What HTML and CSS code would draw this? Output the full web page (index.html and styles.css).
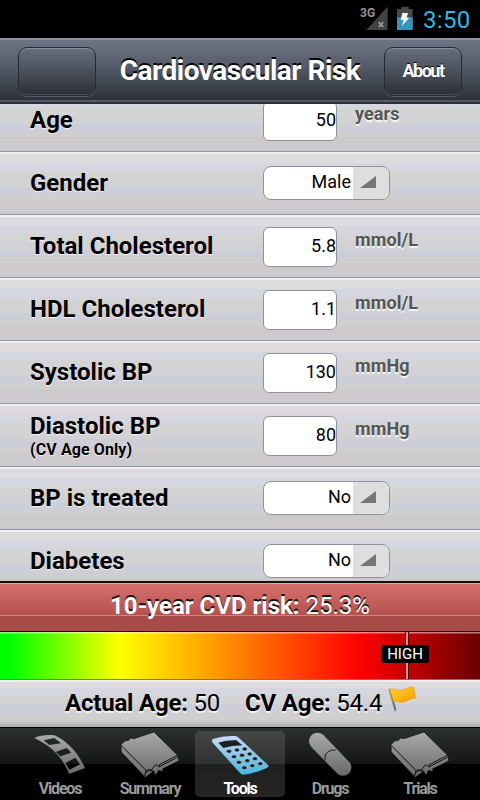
FILE: index.html
```
<!DOCTYPE html>
<html lang="en">
  <head>
    <meta charset="UTF-8" />
    <title>Cardiovascular Risk</title>
    <link rel="stylesheet" href="styles.css">
  </head>
  <body>
    <div class="status">
      <svg class="signal" viewBox="60 0 165 114" width="55" height="38">
        <path d="M143 20V90H79Z" fill="#424242" />
        <path d="M116 66L130 81M130 66L116 81" stroke="#aaa" stroke-width="4" />
        <text x="60" y="50" class="net">3G</text>
        <path d="M171 27H184V20H206V27H218V90H171Z" fill="#484848" />
        <path d="M171 52H218V90H171Z" fill="#3496bb" />
        <path d="M187 39H204L200 53H208L186 78L190 60H182Z" fill="#f4f4f4" />
      </svg>
      <span class="clock">3:50</span>
    </div>

    <div class="header">
      <div class="btn"></div>
      <h1>Cardiovascular Risk</h1>
      <div class="btn">About</div>
    </div>

    <div class="list">
      <div class="rows">
        <div class="row">
          <div class="label">Age</div>
          <div class="input">50</div>
          <div class="unit">years</div>
        </div>
        <div class="row">
          <div class="label">Gender</div>
          <div class="select"><span>Male</span><i></i></div>
        </div>
        <div class="row">
          <div class="label">Total Cholesterol</div>
          <div class="input">5.8</div>
          <div class="unit">mmol/L</div>
        </div>
        <div class="row">
          <div class="label">HDL Cholesterol</div>
          <div class="input">1.1</div>
          <div class="unit">mmol/L</div>
        </div>
        <div class="row">
          <div class="label">Systolic BP</div>
          <div class="input">130</div>
          <div class="unit">mmHg</div>
        </div>
        <div class="row">
          <div class="label two">Diastolic BP<small>(CV Age Only)</small></div>
          <div class="input">80</div>
          <div class="unit">mmHg</div>
        </div>
        <div class="row">
          <div class="label">BP is treated</div>
          <div class="select"><span>No</span><i></i></div>
        </div>
        <div class="row">
          <div class="label">Diabetes</div>
          <div class="select"><span>No</span><i></i></div>
        </div>
      </div>
    </div>

    <div class="risk"><b>10-year CVD risk:</b>&nbsp;<span>25.3%</span></div>
    <div class="scale">
      <div class="marker"></div>
      <div class="level">HIGH</div>
    </div>
    <div class="ages">
      <div class="actual"><b>Actual Age:</b> 50</div>
      <div class="cv"><b>CV Age:</b> 54.4</div>
      <svg class="flag" viewBox="444 330 90 84" width="30" height="28">
        <defs>
          <linearGradient id="gold" x1="0" y1="0" x2="1" y2="1">
            <stop offset="0" stop-color="#ffcf38" />
            <stop offset=".45" stop-color="#fdbb18" />
            <stop offset="1" stop-color="#f39a08" />
          </linearGradient>
        </defs>
        <path d="M449 344L466 406" stroke="#999" stroke-width="7" stroke-linecap="round" />
        <path d="M450 344L467 405" stroke="#555" stroke-width="3" />
        <path d="M449 343C462 338 474 350 488 345C503 340 508 335 521 336L527 370C512 369 502 380 488 382C477 383 468 376 460 378Z" fill="url(#gold)" stroke="#eda314" stroke-width="2" />
      </svg>
    </div>

    <div class="tabs">
      <svg width="0" height="0" class="defs">
        <defs>
          <linearGradient id="grey" x1="0" y1="0" x2="0" y2="1">
            <stop offset="0" stop-color="#aaa" />
            <stop offset="1" stop-color="#686868" />
          </linearGradient>
          <linearGradient id="blue" x1="0" y1="0" x2="0" y2="1">
            <stop offset="0" stop-color="#c9d9f8" />
            <stop offset="1" stop-color="#43b5dc" />
          </linearGradient>
          <symbol id="book" viewBox="315 24 270 150">
            <path d="M363 74L374 63L386 61L391 54L402 56L462 36L532 105L537 122L487 147L489 155L476 151L467 166L462 154L452 160L436 172L364 96Z" fill="url(#grey)" stroke="#111" stroke-width="2" />
            <path d="M363 76L438 151L455 149L467 134L479 141L478 134L532 106M438 151L434 169M480 139L532 112M438 158L447 151L461 154M456 150L463 165" fill="none" stroke="#111" stroke-width="3" />
          </symbol>
        </defs>
      </svg>
      <div class="tab">
        <svg viewBox="45 24 270 150" width="90" height="50">
          <path fill-rule="evenodd" fill="url(#grey)" d="M103 54C120 46 140 44 163 46C205 65 235 100 255 144L207 162C190 115 155 78 103 54ZM131 61L148 75L183 70L163 54ZM167 96L181 109L214 98L200 84ZM196 129L208 149L240 133L226 113Z" />
        </svg>
        Videos
      </div>
      <div class="tab">
        <svg width="90" height="50"><use href="#book" width="90" height="50" /></svg>
        Summary
      </div>
      <div class="tab active">
        <svg viewBox="45 24 270 150" width="90" height="50">
          <path d="M96 63Q95 58 101 56Q130 46 166 48Q173 49 177 54L265 136Q267 140 262 143Q225 160 190 164Q184 164 180 159L98 68Z" fill="url(#blue)" />
          <path d="M115 68Q140 60 169 61L187 76Q157 77 130 84Z" fill="#1b2023" />
          <g fill="#1b2328" stroke="#dceaf6" stroke-width="1.5">
            <ellipse cx="147" cy="94" rx="8" ry="6" /><ellipse cx="171" cy="90" rx="8" ry="6" /><ellipse cx="194" cy="87" rx="8" ry="6" />
            <ellipse cx="162" cy="110" rx="8" ry="6" /><ellipse cx="186" cy="106" rx="8" ry="6" /><ellipse cx="209" cy="102" rx="8" ry="6" />
            <ellipse cx="177" cy="127" rx="8" ry="6" /><ellipse cx="202" cy="122" rx="8" ry="6" /><ellipse cx="225" cy="116" rx="8" ry="6" />
            <ellipse cx="193" cy="143" rx="8" ry="6" /><ellipse cx="217" cy="137" rx="8" ry="6" /><ellipse cx="241" cy="131" rx="8" ry="6" />
          </g>
        </svg>
        Tools
      </div>
      <div class="tab">
        <svg viewBox="-15 24 270 150" width="90" height="50">
          <path d="M101 46L177 125A24 24 0 0 1 141 160L64 81A25 25 0 0 1 101 46Z" fill="url(#grey)" />
          <path d="M106 122Q102 106 112 97Q122 88 137 90" fill="none" stroke="#222" stroke-width="3" />
        </svg>
        Drugs
      </div>
      <div class="tab">
        <svg width="90" height="50"><use href="#book" width="90" height="50" /></svg>
        Trials
      </div>
    </div>
  </body>
</html>
```

FILE: styles.css
```
* {
  box-sizing: border-box;
}
body {
  margin: 0;
  width: 480px;
  height: 800px;
  overflow: hidden;
  display: flex;
  flex-direction: column;
  background: #000;
  font-family: Roboto, "Liberation Sans", sans-serif;
  color: #000;
}
.status {
  height: 38px;
  flex: none;
  display: flex;
  justify-content: flex-end;
  padding-right: 10px;
  color: #33b5e5;
}
.signal {
  margin-right: 8px;
}
.net {
  font: bold 36px Roboto, sans-serif;
  fill: #949494;
}
.clock {
  font-size: 24px;
  line-height: 40px;
  letter-spacing: 0.3px;
  width: 47px;
}
.header {
  height: 66px;
  flex: none;
  display: flex;
  align-items: flex-start;
  justify-content: space-between;
  padding: 7px 18px 0;
  border-top: 2px solid #8c919c;
  border-bottom: 2px solid #2d3038;
  background: linear-gradient(#6d7484, #5d6370 30%, #434a54 65%, #2d313a 96%, #535862 97%);
}
.header h1 {
  margin: 0;
  font-size: 28px;
  line-height: 47px;
  letter-spacing: -0.5px;
  color: #fff;
  text-shadow: 0 -2px 0 #000;
}
.btn {
  width: 78px;
  height: 49px;
  border: 1px solid #262a33;
  border-radius: 9px;
  background: linear-gradient(#686e7b, #4a505b 50%, #2b2e36);
  box-shadow: inset 0 2px 1px -1px #8c919b, inset 0 -1px 0 #4b4f59, 0 1px 0 #555b66;
  color: #fff;
  font-weight: bold;
  font-size: 18px;
  line-height: 46px;
  letter-spacing: -1.5px;
  text-align: center;
  text-shadow: 0 -1px 0 #000;
}
.list {
  height: 477px;
  flex: none;
  overflow: hidden;
}
.rows {
  margin-top: -15px;
}
.row {
  height: 63px;
  display: flex;
  align-items: flex-start;
  padding-left: 30px;
  background: linear-gradient(#efeff0 2px, #dddbde 2px 11px, #d5d6df 11px 19px, #d5d4d5 19px 27px, #d2d1d4 27px 35px, #cdced7 35px 43px, #cfcfcf 43px 48px, #cdcacd 48px 61px, #c8cad3 61px 62px, #959aa4 62px);
}
.label {
  width: 233px;
  padding-top: 16px;
  font-size: 24px;
  font-weight: bold;
  line-height: 30px;
  text-shadow: 0 1px 1px #f4f4f4;
}
.label.two {
  padding-top: 7px;
}
.label small {
  display: block;
  font-size: 16px;
  line-height: 18px;
  letter-spacing: 0.1px;
}
.input {
  width: 74px;
  height: 40px;
  margin-top: 12px;
  border: 1px solid #90929b;
  border-radius: 6px;
  background: #fff;
  font-size: 18px;
  line-height: 36px;
  text-align: right;
}
.select {
  width: 127px;
  height: 34px;
  margin-top: 14px;
  display: flex;
  border: 1px solid #90929b;
  border-radius: 8px;
  overflow: hidden;
  background: #fff;
  font-size: 18px;
  line-height: 30px;
}
.select span {
  width: 89px;
  padding-right: 2px;
  text-align: right;
}
.select i {
  flex: 1;
  background: #dedede;
}
.select i::before {
  content: "";
  display: block;
  width: 16px;
  height: 12px;
  margin: 9px 0 0 7px;
  background: #757775;
  clip-path: polygon(100% 0, 100% 100%, 0 100%);
}
.unit {
  margin: 14px 0 0 18px;
  font-size: 18px;
  font-weight: bold;
  line-height: 22px;
  letter-spacing: 0.1px;
  color: #555;
  text-shadow: 0 2px 0 #f4f4f4;
}
.risk {
  height: 51px;
  flex: none;
  display: flex;
  justify-content: center;
  border-top: 2px solid #111;
  border-bottom: 1px solid #111;
  background: linear-gradient(#f0a09c 1px, #d9706e 1px, #b3514e 32px, #cf8581 32px 33px, #a94b48 33px);
  color: #fff;
  font-size: 24px;
  line-height: 46px;
  text-shadow: 0 -2px 0 #111;
}
.scale {
  position: relative;
  height: 48px;
  flex: none;
  border-bottom: 1px solid #777;
  background: linear-gradient(rgba(255, 255, 255, 0.5) 1px, transparent 2px), linear-gradient(90deg, #0f0 2%, #ff0 25%, #f00 75%, #700000 99%);
}
.marker {
  position: absolute;
  left: 405px;
  top: 0;
  width: 4px;
  height: 47px;
  border: solid #400;
  border-width: 0 1px;
  background: #e88;
}
.level {
  position: absolute;
  left: 381px;
  top: 13px;
  width: 48px;
  height: 18px;
  border-radius: 3px;
  background: #000;
  color: #fff;
  font-size: 15px;
  line-height: 18px;
  text-align: center;
}
.ages {
  height: 47px;
  flex: none;
  display: flex;
  padding-left: 65px;
  background: linear-gradient(#efeff0 2px, #dddbde 2px 8px, #d5d6df 8px 16px, #d5d4d5 16px 24px, #cdced7 24px 33px, #cfcfcf 33px 40px, #aaa9ab);
  font-size: 24px;
  line-height: 46px;
  letter-spacing: -0.2px;
  text-shadow: 0 2px 0 #f4f4f4;
}
.actual {
  width: 180px;
}
.cv {
  width: 143px;
}
.flag {
  margin-top: 5px;
}
.tabs {
  height: 73px;
  flex: none;
  display: flex;
  padding: 4px 15px 3px;
  background: linear-gradient(#000 1px, #2d302f 1px, #131615 37px, #000 37px);
}
.defs {
  position: absolute;
}
.tab {
  width: 90px;
  height: 66px;
  border-radius: 5px;
  color: #999;
  font-size: 16px;
  font-weight: bold;
  line-height: 22px;
  letter-spacing: -1.2px;
  text-align: center;
}
.tab svg {
  display: block;
  margin-top: -3px;
}
.tab.active {
  background: linear-gradient(#454746, #303231 33px, #20211f 33px, #242524);
  color: #fff;
}
```
